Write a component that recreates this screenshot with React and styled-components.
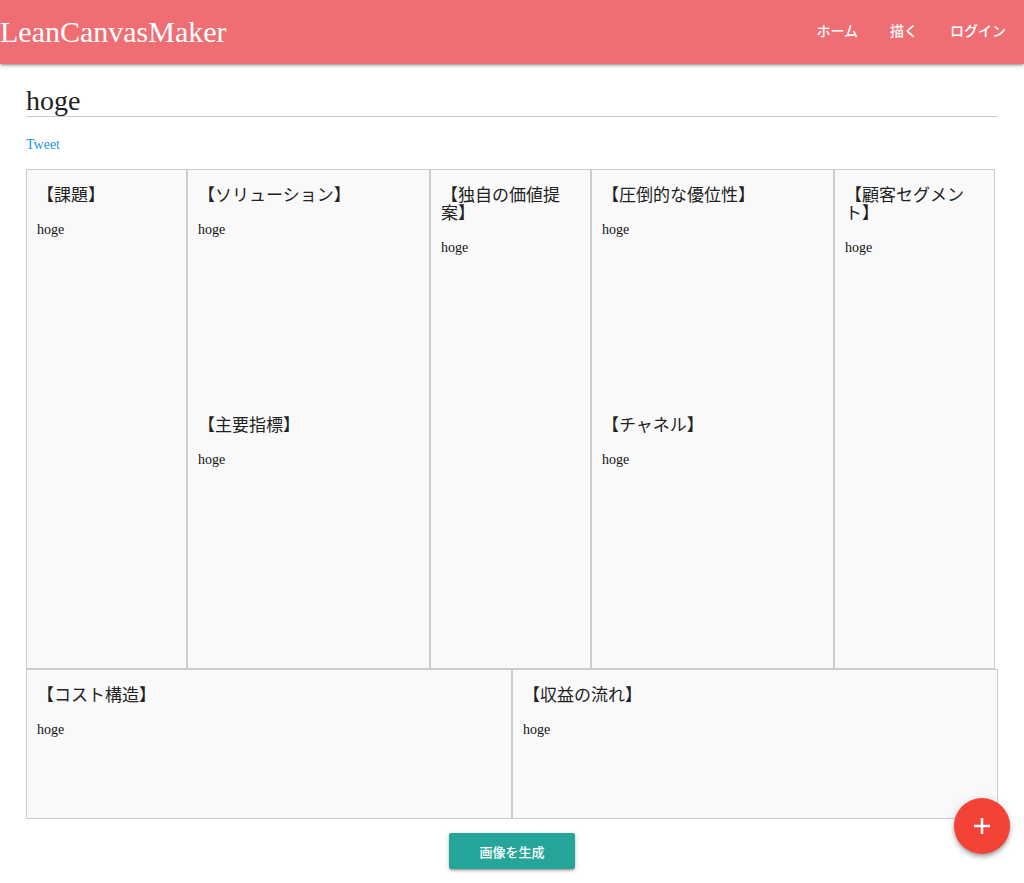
import React from 'react';
import styled, { createGlobalStyle } from 'styled-components';

const GlobalStyle = createGlobalStyle`
  html, body {
    margin: 0;
    padding: 0;
    background: #fff;
    font-family: "Liberation Serif", "Noto Sans CJK JP", serif;
    color: #222;
  }
  * { box-sizing: border-box; }
`;

const shadow = '0 2px 2px 0 rgba(0,0,0,0.14), 0 3px 1px -2px rgba(0,0,0,0.12), 0 1px 5px 0 rgba(0,0,0,0.2)';

const Nav = styled.nav`
  height: 64px;
  background: #ee6e73;
  box-shadow: ${shadow};
  display: flex;
  align-items: center;
  justify-content: space-between;
  color: #fff;
`;

const Logo = styled.a`
  font-family: "Liberation Serif", serif;
  font-size: 30px;
  line-height: 64px;
  color: #fff;
  text-decoration: none;
`;

const NavLinks = styled.ul`
  display: flex;
  list-style: none;
  margin: 0;
  padding: 0 2px 4px 0;
`;

const NavLink = styled.li`
  padding: 0 16px;
  font-family: "Noto Sans CJK JP", sans-serif;
  font-size: 14px;
  font-weight: 500;
  line-height: 60px;
  color: #fff;
`;

const Main = styled.main`
  margin: 0 26px;
`;

const Title = styled.h1`
  margin: 22px 0 0;
  font-size: 28px;
  font-weight: normal;
  line-height: 30px;
  border-bottom: 1px solid #ccc;
`;

const Tweet = styled.a`
  display: block;
  margin-top: 18px;
  font-size: 14px;
  line-height: 20px;
  color: #1b95e0;
  text-decoration: none;
`;

const Canvas = styled.div`
  margin-top: 14px;
  width: 972px;
`;

const TopRow = styled.div`
  display: grid;
  grid-template-columns: 161px 243px 161px 243px 161px;
`;

const Column = styled.div`
  height: 500px;
  background: #f9f9f9;
  border: 1px solid #ccc;
  display: flex;
  flex-direction: column;
`;

const Section = styled.div`
  height: ${p => (p.$split ? '230px' : 'auto')};
  padding: 17px 10px 10px;
`;

const BottomRow = styled.div`
  display: grid;
  grid-template-columns: 1fr 1fr;
`;

const BottomCell = styled.div`
  height: 150px;
  background: #f9f9f9;
  border: 1px solid #ccc;
  padding: 17px 10px 10px;
`;

const CellTitle = styled.h4`
  margin: 0;
  font-family: "Liberation Serif", "Noto Sans CJK JP", serif;
  font-size: 17px;
  font-weight: normal;
  line-height: 18px;
  color: #222;
`;

const CellText = styled.p`
  margin: 16px 0 0;
  font-size: 14px;
  line-height: 18px;
  color: #111;
`;

const Actions = styled.div`
  display: flex;
  justify-content: center;
  margin-top: 14px;
  padding-bottom: 14px;
`;

const Button = styled.button`
  height: 36px;
  padding: 0 30px;
  border: none;
  border-radius: 2px;
  background: #26a69a;
  color: #fff;
  font-family: "Noto Sans CJK JP", sans-serif;
  font-size: 13px;
  font-weight: 500;
  box-shadow: ${shadow};
  cursor: pointer;
`;

const Fab = styled.button`
  position: fixed;
  right: 14px;
  bottom: 29px;
  width: 56px;
  height: 56px;
  border-radius: 50%;
  border: none;
  background: #f44336;
  display: flex;
  align-items: center;
  justify-content: center;
  box-shadow: 0 4px 5px 0 rgba(0,0,0,0.14), 0 1px 10px 0 rgba(0,0,0,0.12), 0 2px 4px -1px rgba(0,0,0,0.3);
  cursor: pointer;
`;

const Block = ({ title, text, split }) => (
  <Section $split={split}>
    <CellTitle>{title}</CellTitle>
    <CellText>{text}</CellText>
  </Section>
);

const columns = [
  [['【課題】', 'hoge']],
  [['【ソリューション】', 'hoge'], ['【主要指標】', 'hoge']],
  [['【独自の価値提案】', 'hoge']],
  [['【圧倒的な優位性】', 'hoge'], ['【チャネル】', 'hoge']],
  [['【顧客セグメント】', 'hoge']],
];

export default function App() {
  return (
    <>
      <GlobalStyle />
      <Nav>
        <Logo href="#">LeanCanvasMaker</Logo>
        <NavLinks>
          <NavLink>ホーム</NavLink>
          <NavLink>描く</NavLink>
          <NavLink>ログイン</NavLink>
        </NavLinks>
      </Nav>
      <Main>
        <Title>hoge</Title>
        <Tweet href="#">Tweet</Tweet>
        <Canvas>
          <TopRow>
            {columns.map((col, i) => (
              <Column key={i}>
                {col.map(([t, v]) => (
                  <Block key={t} title={t} text={v} split={col.length > 1} />
                ))}
              </Column>
            ))}
          </TopRow>
          <BottomRow>
            <BottomCell>
              <CellTitle>【コスト構造】</CellTitle>
              <CellText>hoge</CellText>
            </BottomCell>
            <BottomCell>
              <CellTitle>【収益の流れ】</CellTitle>
              <CellText>hoge</CellText>
            </BottomCell>
          </BottomRow>
        </Canvas>
        <Actions>
          <Button>画像を生成</Button>
        </Actions>
      </Main>
      <Fab aria-label="add">
        <svg width="20" height="20" viewBox="0 0 20 20">
          <path d="M10 2v16M2 10h16" stroke="#fff" strokeWidth="2.5" />
        </svg>
      </Fab>
    </>
  );
}
